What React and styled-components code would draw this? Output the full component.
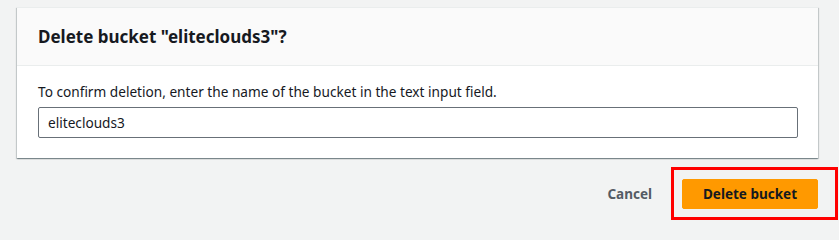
import React, { useState } from "react";
import styled, { createGlobalStyle } from "styled-components";

const GlobalStyle = createGlobalStyle`
  body {
    margin: 0;
    background: #f2f3f3;
    font-family: "Noto Sans", "Open Sans", sans-serif;
    color: #16191f;
  }
`;

const Page = styled.div`
  box-sizing: border-box;
  min-height: 229px;
  width: 839px;
  padding: 7px 21px 0 17px;
`;

const Card = styled.div`
  background: #ffffff;
  border-top: 1px solid #eaeded;
  box-shadow: 0 1px 1px 0 rgba(0, 28, 36, 0.3),
    1px 1px 1px 0 rgba(0, 28, 36, 0.15), -1px 1px 1px 0 rgba(0, 28, 36, 0.15);
`;

const CardHeader = styled.div`
  background: #fafafa;
  border-bottom: 1px solid #eaeded;
  height: 57px;
  display: flex;
  align-items: center;
  padding: 0 21px;
`;

const Title = styled.h2`
  margin: 0;
  font-size: 17px;
  font-weight: 700;
  color: #16191f;
`;

const CardBody = styled.div`
  padding: 16px 20px 20px 21px;
`;

const Label = styled.p`
  margin: 0 0 5px;
  font-size: 13.65px;
  line-height: 20px;
  color: #16191f;
`;

const TextInput = styled.input`
  display: block;
  box-sizing: border-box;
  width: 100%;
  height: 31px;
  border: 1px solid #687078;
  border-radius: 2px;
  padding: 0 9px;
  font-family: inherit;
  font-size: 13.65px;
  color: #16191f;
  outline: none;
`;

const Footer = styled.div`
  display: flex;
  justify-content: flex-end;
  align-items: center;
  margin-top: 21px;
  gap: 8px;
`;

const Button = styled.button`
  position: relative;
  height: 30px;
  padding: 0 ${(p) => (p.$primary ? "20px" : "21px")};
  border: 1px solid ${(p) => (p.$primary ? "#ff9900" : "transparent")};
  border-radius: 2px;
  background: ${(p) => (p.$primary ? "#ff9900" : "transparent")};
  color: ${(p) => (p.$primary ? "#16191f" : "#545b64")};
  font-family: inherit;
  font-size: 13.5px;
  font-weight: 700;
  cursor: pointer;
`;

const Highlight = styled.span`
  position: absolute;
  left: -12px;
  top: -13px;
  width: 167px;
  height: 53px;
  box-sizing: border-box;
  border: 3px solid #ff0000;
  pointer-events: none;
`;

export default function App() {
  const [name, setName] = useState("eliteclouds3");
  return (
    <Page>
      <GlobalStyle />
      <Card>
        <CardHeader>
          <Title>Delete bucket "eliteclouds3"?</Title>
        </CardHeader>
        <CardBody>
          <Label>
            To confirm deletion, enter the name of the bucket in the text input
            field.
          </Label>
          <TextInput value={name} onChange={(e) => setName(e.target.value)} />
        </CardBody>
      </Card>
      <Footer>
        <Button>Cancel</Button>
        <Button $primary>
          Delete bucket
          <Highlight />
        </Button>
      </Footer>
    </Page>
  );
}
